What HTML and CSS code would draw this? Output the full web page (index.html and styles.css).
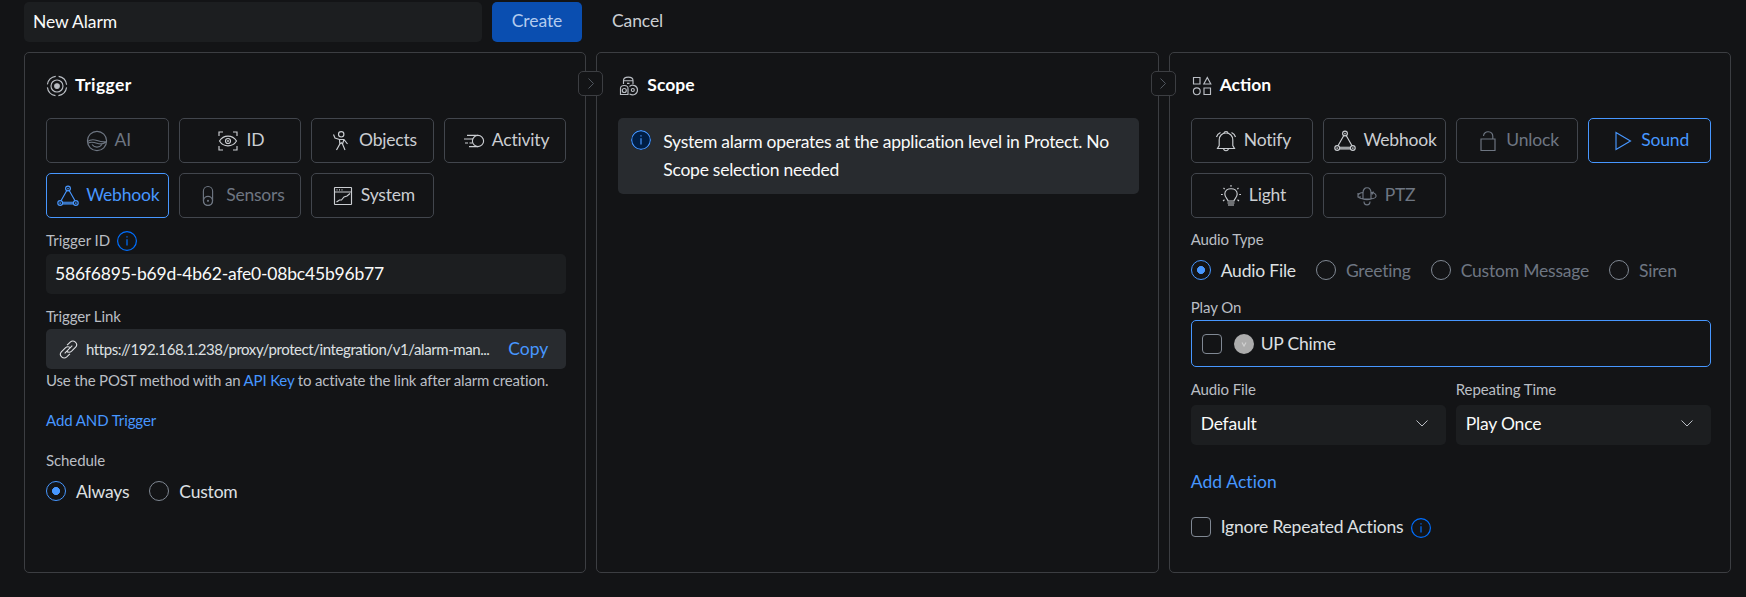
FILE: index.html
```html
<!DOCTYPE html>
<html lang="en">
<head>
    <meta charset="UTF-8">
    <meta name="viewport" content="width=device-width, initial-scale=1.0">
    <title>New Alarm</title>
    <link rel="stylesheet" href="styles.css">
</head>
<body>

<!-- shared icons -->
<svg class="sprite" width="0" height="0">
    <symbol id="icon-webhook" viewBox="0 0 22 22">
        <circle cx="11" cy="3.5" r="2.4"/><circle cx="3.2" cy="18" r="2.4"/><circle cx="18.8" cy="18" r="2.4"/>
        <circle cx="11" cy="3.5" r=".3"/><circle cx="3.2" cy="18" r=".3"/><circle cx="18.8" cy="18" r=".3"/>
        <path d="M9.800 5.500 4 15.800M12.200 5.500 18 15.800M5.500 17.200h11M5.500 18.800h11"/>
    </symbol>
    <symbol id="icon-info" viewBox="0 0 20 20">
        <circle cx="10" cy="10" r="9.4"/><path d="M10 8.3v6.2M10 5.2v1.3"/>
    </symbol>
    <symbol id="icon-chevron" viewBox="0 0 12 7">
        <path d="M.5.5 6 6 11.500.5"/>
    </symbol>
</svg>

<form class="alarm-form">
    <div class="toolbar">
        <input class="input name-input" type="text" value="New Alarm">
        <button class="create" type="button">Create</button>
        <button class="cancel" type="button">Cancel</button>
    </div>

    <div class="panels">
        <section class="panel">
            <h2 class="panel-title">
                <svg class="icon" viewBox="0 0 22 22"><circle cx="11" cy="11" r="9.7" stroke-dasharray="12.2 3" stroke-dashoffset="-1.5"/><circle cx="11" cy="11" r="6"/><circle class="solid" cx="11" cy="11" r="2.3"/></svg>
                <span class="wide">Trigger</span>
            </h2>
            <span class="toggle"><svg viewBox="0 0 6 11"><path d="M.5.5 5.500 5.500.5 10.500"/></svg></span>
            <div class="options">
                <button class="option disabled" type="button"><svg class="icon" viewBox="0 0 22 22"><circle cx="11" cy="11" r="9.600"/><path d="M1.500 11.500c3.500-2.500 6.500-2 9.500-1s6 2 9.500 1M2 13.200c3-2 6-1 9 0s6 1 9-1M6 14.500c2.500 3.500 7.500 3.500 10 0"/></svg>AI</button>
                <button class="option" type="button"><svg class="icon" viewBox="0 0 22 22"><path d="M2 6V2h4M16 2h4v4M20 16v4h-4M6 20H2v-4M2.500 11c4-6.500 13-6.500 17 0-4 6.500-13 6.500-17 0z"/><circle cx="11" cy="11" r="2.500"/><circle cx="11" cy="11" r=".4"/></svg>ID</button>
                <button class="option" type="button"><svg class="icon" viewBox="0 0 22 22"><circle cx="11.200" cy="4.300" r="2.700"/><path d="M3.500 4.500 5 8l4.500 1.500h4.500l3.500 4.500M9.500 9.500l.3 4.500-3.300 6M14 9.500 12.500 14l2.500 6M9.800 14l1.500-1.300 1.200 1.300"/></svg>Objects</button>
                <button class="option" type="button"><svg class="icon" viewBox="0 0 22 22"><circle cx="15" cy="11" r="5.600"/><path d="M4 5.400h11M1 9h9M2 13h3M6.500 13h3M6 16.600h9"/></svg>Activity</button>
                <button class="option active" type="button"><svg class="icon"><use href="#icon-webhook"/></svg>Webhook</button>
                <button class="option disabled" type="button"><svg class="icon" viewBox="0 0 22 22"><rect x="6.400" y="1.500" width="9.200" height="19" rx="4.600"/><circle cx="11" cy="15.800" r="4.500"/><circle cx="11" cy="15.800" r=".5"/></svg>Sensors</button>
                <button class="option" type="button"><svg class="icon" viewBox="0 0 22 22"><rect x="2.500" y="2.500" width="17" height="17" rx=".5"/><path d="M2.500 7h17M4.500 4.800h1M7 4.800h1M9.500 4.800h1M4.500 17l3-2h2l2.500-3 3-1 3-2.500"/></svg>System</button>
            </div>

            <label class="label trigger-id" for="triggerId">Trigger ID <svg class="info"><use href="#icon-info"/></svg></label>
            <input class="input" type="text" id="triggerId" value="586f6895-b69d-4b62-afe0-08bc45b96b77">

            <span class="label trigger-link">Trigger Link</span>
            <div class="link-box">
                <svg class="icon" viewBox="0 0 20 20"><path d="m8.500 5.500 3.300-3.300c3.600-3.200 9 1.500 5.700 5.400l-4.200 4.200c-1.800 1.600-4.200 1.400-5.400-.4M11.500 14.500l-3.300 3.300c-3.600 3.200-9-1.500-5.700-5.400l4.200-4.200c1.800-1.600 4.200-1.400 5.400.4M7.500 12.500l6.500-6.500M6 14l2-2"/></svg>
                <span class="url">https://192.168.1.238/proxy/protect/integration/v1/alarm-man...</span>
                <a class="copy">Copy</a>
            </div>
            <p class="hint">Use the POST method with an <a>API Key</a> to activate the link after alarm creation.</p>
            <a class="add-trigger">Add AND Trigger</a>

            <span class="label schedule">Schedule</span>
            <div class="radios">
                <label class="radio checked"><i></i>Always</label>
                <label class="radio"><i></i>Custom</label>
            </div>
        </section>

        <section class="panel">
            <h2 class="panel-title">
                <svg class="icon" viewBox="0 0 22 22"><path d="M5.500 9V5.500C5.500 1 15 1 15 5.500V9M5.500 5.700H15M9 8.300h2.500M2.500 19.500v-6c0-4 7.500-4 7.500 0v6zM11.500 11.500c3-3 8-.5 8 3.500s-4 6-8 4"/><circle cx="6.300" cy="15.500" r="2"/><circle cx="14.800" cy="15" r="1.500"/></svg>
                <span>Scope</span>
            </h2>
            <span class="toggle"><svg viewBox="0 0 6 11"><path d="M.5.5 5.500 5.500.5 10.500"/></svg></span>
            <div class="notice">
                <svg class="info"><use href="#icon-info"/></svg>
                <p>System alarm operates at the application level in Protect. No Scope selection needed</p>
            </div>
        </section>

        <section class="panel">
            <h2 class="panel-title">
                <svg class="icon" viewBox="0 0 22 22"><path d="M2.500 2.500h6.500v6.500h-6.500zM13 13h6.500v6.500H13zM16.300 2.500l3.500 6.500h-7z"/><circle cx="5.800" cy="16.300" r="3.400"/></svg>
                <span>Action</span>
            </h2>
            <div class="options">
                <button class="option" type="button"><svg class="icon" viewBox="0 0 22 22"><path d="M2.500 18.500h17l-1.700-3V10c0-4-2.700-7-6.800-7s-6.800 3-6.800 7v5.500zM8.500 18.500c.5 3 4.500 3 5 0M9 3c0-2 4-2 4 0M1.500 7c.5-2 2-3.600 4-4.500M20.500 7c-.5-2-2-3.600-4-4.500"/></svg>Notify</button>
                <button class="option" type="button"><svg class="icon"><use href="#icon-webhook"/></svg>Webhook</button>
                <button class="option disabled" type="button"><svg class="icon" viewBox="0 0 22 22"><path d="M4 9h14v11.500H4zM6.500 6c.3-6 9.300-5.500 9.300.5V9"/></svg>Unlock</button>
                <button class="option active" type="button"><svg class="icon" viewBox="0 0 22 22"><path d="M4 2.500v17L18.500 11z"/></svg>Sound</button>
                <button class="option" type="button"><svg class="icon" viewBox="0 0 22 22"><path d="M8 16c0-2-3.200-3.300-3.200-7 0-7 12.400-7 12.400 0 0 3.700-3.200 5-3.200 7zM7.500 18h7M8 20h6M11 0v1.800M3.500 3l1.200 1.200M18.500 3l-1.200 1.200M1 9.500h1.800M21 9.500h-1.800M3 16l1.500-1.200M19 16l-1.500-1.200"/></svg>Light</button>
                <button class="option disabled" type="button"><svg class="icon" viewBox="0 0 22 22"><path d="M7 14V8c0-7 8-7 8 0v6M7 14c2 1 6 1 8 0M8 16.500c0 4.500 6 4.500 6 0M6.500 7.500c-3 .5-5 2-4.500 4 .5 3.500 17.500 3.500 18 0 .3-2-1.500-3.500-4-4M2 8v4h3M18 7l-2 .5.500 2"/></svg>PTZ</button>
            </div>

            <span class="label audio-type">Audio Type</span>
            <div class="radios">
                <label class="radio checked"><i></i>Audio File</label>
                <label class="radio disabled"><i></i>Greeting</label>
                <label class="radio disabled"><i></i>Custom Message</label>
                <label class="radio disabled"><i></i>Siren</label>
            </div>

            <span class="label play-on">Play On</span>
            <div class="device">
                <i class="checkbox"></i>
                <svg class="chime" viewBox="0 0 20 20"><circle cx="10" cy="10" r="10"/><path d="m8 8.500 2 3.500 2-3.500"/></svg>
                <span>UP Chime</span>
            </div>

            <div class="selects">
                <div>
                    <span class="label">Audio File</span>
                    <div class="select">Default <svg><use href="#icon-chevron"/></svg></div>
                </div>
                <div>
                    <span class="label">Repeating Time</span>
                    <div class="select">Play Once <svg><use href="#icon-chevron"/></svg></div>
                </div>
            </div>

            <a class="add-action">Add Action</a>
            <label class="ignore"><i class="checkbox"></i>Ignore Repeated Actions <svg class="info"><use href="#icon-info"/></svg></label>
        </section>
    </div>
</form>

</body>
</html>
```
FILE: styles.css
```css
* {
    box-sizing: border-box;
}
body {
    margin: 0;
    height: 597px;
    overflow: hidden;
    background-color: #131416;
    color: #dee0e3;
    font-family: Lato, sans-serif;
    font-size: 17.5px;
    line-height: 25px;
    letter-spacing: -0.2px;
}
svg {
    fill: none;
    stroke: currentColor;
    stroke-width: 1.15;
    flex-shrink: 0;
}
.sprite {
    position: absolute;
}
button, input {
    font: inherit;
    letter-spacing: inherit;
    cursor: pointer;
}
a {
    color: #4797ff;
    cursor: pointer;
}
p {
    margin: 0;
}
.alarm-form {
    padding: 2px 15px 0 24px;
}
.toolbar {
    display: flex;
    height: 40px;
}
.input {
    display: block;
    width: 100%;
    height: 40px;
    padding: 0 10px 2px 9px;
    border: none;
    border-radius: 5px;
    outline: none;
    background-color: #1c1e20;
    color: #f9fafa;
}
.name-input {
    width: 458px;
    letter-spacing: -0.1px;
}
.create {
    width: 90px;
    margin-left: 10px;
    padding: 0 0 3px;
    border: none;
    border-radius: 5px;
    background-color: #0a4eb0;
    color: #b3cbee;
    letter-spacing: -0.1px;
}
.cancel {
    margin-left: 30px;
    padding: 0 0 3px;
    border: none;
    background: none;
    color: #cbced2;
    letter-spacing: -0.1px;
}
.panels {
    display: grid;
    grid-template-columns: repeat(3, 1fr);
    gap: 10px;
    margin-top: 10px;
}
.panel {
    position: relative;
    min-width: 0;
    height: 521px;
    padding: 20px 19px 0 21px;
    border: 1px solid #3c3e42;
    border-radius: 5px;
}
.panel-title {
    display: flex;
    align-items: center;
    gap: 7px;
    height: 25px;
    margin: 0;
    color: #fff;
    font-size: 17.5px;
    letter-spacing: 0;
}
.panel-title span {
    padding-bottom: 2px;
}
.panel-title .wide {
    letter-spacing: 0.4px;
}
.icon {
    width: 22px;
    height: 22px;
}
.panel-title .icon {
    color: #babec4;
}
.solid {
    fill: currentColor;
}
.toggle {
    position: absolute;
    top: 18px;
    right: -18px;
    z-index: 1;
    display: flex;
    align-items: center;
    justify-content: center;
    width: 25px;
    height: 25px;
    border: 1px solid #3c3e42;
    border-radius: 5px;
    background-color: #131416;
    color: #50565e;
}
.toggle svg {
    width: 6px;
    height: 11px;
    stroke-width: 1;
}
.options {
    display: grid;
    grid-template-columns: repeat(4, 1fr);
    gap: 10px;
    margin-top: 20px;
}
.option {
    display: flex;
    align-items: center;
    justify-content: center;
    gap: 7px;
    height: 45px;
    padding: 0 0 2px 2px;
    border: 1px solid #42464d;
    border-radius: 5px;
    background: none;
    color: #cbced2;
}
.option .icon {
    position: relative;
    top: 1px;
}
.option.active {
    border-color: #4797ff;
    color: #4797ff;
}
.option.disabled {
    color: #6e7682;
}
.label {
    display: block;
    height: 20px;
    color: #babec4;
    font-size: 15px;
    line-height: 18px;
    letter-spacing: -0.1px;
}
.info {
    width: 20px;
    height: 20px;
    color: #006fff;
    stroke-width: 1.2;
}
.trigger-id {
    display: flex;
    align-items: flex-start;
    gap: 7px;
    margin-top: 13px;
    margin-bottom: 3px;
    letter-spacing: 0;
}
.trigger-link {
    margin-top: 13px;
}
.link-box {
    display: flex;
    align-items: center;
    height: 40px;
    margin-top: 2px;
    padding: 0 18px 0 13px;
    border-radius: 5px;
    background-color: #282b2f;
}
.link-box .icon {
    width: 19px;
    height: 19px;
}
.url {
    flex: 1;
    margin-left: 8px;
    white-space: nowrap;
    font-size: 15px;
    letter-spacing: -0.43px;
}
.copy {
    padding-bottom: 2px;
    letter-spacing: 0;
}
.hint {
    margin-top: 1px;
    color: #babec4;
    font-size: 15px;
    line-height: 20px;
    letter-spacing: -0.17px;
    white-space: nowrap;
}
.add-trigger {
    display: block;
    margin-top: 20px;
    font-size: 15px;
    line-height: 20px;
    letter-spacing: -0.1px;
}
.schedule {
    margin-top: 21px;
}
.radios {
    display: flex;
    gap: 20px;
    height: 24px;
    margin-top: 8px;
    margin-bottom: 16px;
}
.radio {
    display: flex;
    align-items: center;
    gap: 10px;
    white-space: nowrap;
}
.radio i {
    width: 20px;
    height: 20px;
    border: 1px solid #808893;
    border-radius: 50%;
}
.radio.checked i {
    border-color: #4797ff;
    background: radial-gradient(circle, #4797ff 3.7px, transparent 4.3px);
}
.radio.disabled {
    color: #6e7682;
}
.notice {
    display: flex;
    gap: 12px;
    height: 76px;
    margin-top: 20px;
    padding: 10px 13px;
    border-radius: 5px;
    background-color: #282b2f;
    color: #f9fafa;
    line-height: 28px;
    letter-spacing: -0.26px;
}
.notice .info {
    margin-top: 2px;
    border-radius: 50%;
    background-color: #001e45;
    color: #4797ff;
}
.audio-type {
    margin-top: 12px;
}
.device {
    display: flex;
    align-items: center;
    height: 47px;
    margin-top: 2px;
    padding-left: 10px;
    border: 1px solid #4797ff;
    border-radius: 5px;
}
.checkbox {
    width: 20px;
    height: 20px;
    border: 1px solid #808893;
    border-radius: 4px;
}
.chime {
    width: 20px;
    height: 20px;
    margin: 0 7px 0 12px;
    fill: #acacac;
    stroke: none;
}
.chime path {
    stroke: #d0d0d0;
}
.selects {
    display: grid;
    grid-template-columns: 1fr 1fr;
    gap: 10px;
    margin-top: 13px;
}
.select {
    display: flex;
    align-items: center;
    justify-content: space-between;
    height: 40px;
    margin-top: 5px;
    padding: 0 18px 3px 10px;
    border-radius: 5px;
    background-color: #1c1e20;
    color: #f9fafa;
}
.select svg {
    width: 12px;
    height: 7px;
    color: #babec4;
    stroke-width: 1;
}
.add-action {
    display: block;
    margin-top: 24px;
    letter-spacing: 0.1px;
}
.ignore {
    display: flex;
    align-items: center;
    margin-top: 20px;
}
.ignore .checkbox {
    margin-right: 10px;
}
.ignore .info {
    position: relative;
    top: 1px;
    margin-left: 8px;
}
```
